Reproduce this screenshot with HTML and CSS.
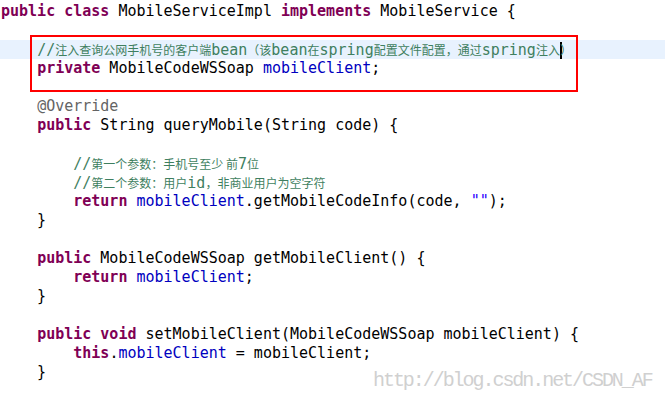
FILE: index.html
```html
<!DOCTYPE html>
<html>
<head>
<meta charset="utf-8">
<link rel="stylesheet" href="styles.css">
</head>
<body>
<div class="editor">
  <div class="ln"><span class="kw">public</span> <span class="kw">class</span> MobileServiceImpl <span class="kw">implements</span> MobileService {</div>
  <div class="ln"> </div>
  <div class="ln current">    <span class="cm">//<span class="zh">注入查询公网手机号的客户端</span>bean<span class="zh">（该</span>bean<span class="zh">在</span>spring<span class="zh">配置文件配置，通过</span>spring<span class="zh">注入</span><span class="caret"></span><span class="zh">）</span></span></div>
  <div class="ln">    <span class="kw">private</span> MobileCodeWSSoap <span class="fd">mobileClient</span>;</div>
  <div class="ln"> </div>
  <div class="ln">    <span class="an">@Override</span></div>
  <div class="ln">    <span class="kw">public</span> String queryMobile(String code) {</div>
  <div class="ln"> </div>
  <div class="ln">        <span class="cm">//<span class="zh">第一个参数：手机号至少 前</span>7<span class="zh">位</span></span></div>
  <div class="ln">        <span class="cm">//<span class="zh">第二个参数：用户</span>id<span class="zh">，非商业用户为空字符</span></span></div>
  <div class="ln">        <span class="kw">return</span> <span class="fd">mobileClient</span>.getMobileCodeInfo(code, <span class="st">""</span>);</div>
  <div class="ln">    }</div>
  <div class="ln"> </div>
  <div class="ln">    <span class="kw">public</span> MobileCodeWSSoap getMobileClient() {</div>
  <div class="ln">        <span class="kw">return</span> <span class="fd">mobileClient</span>;</div>
  <div class="ln">    }</div>
  <div class="ln"> </div>
  <div class="ln">    <span class="kw">public</span> <span class="kw">void</span> setMobileClient(MobileCodeWSSoap mobileClient) {</div>
  <div class="ln">        <span class="kw">this</span>.<span class="fd">mobileClient</span> = mobileClient;</div>
  <div class="ln">    }</div>
  <div class="annot-box"></div>
  <div class="watermark">http://blog.csdn.net/CSDN_AF</div>
</div>
</body>
</html>
```
FILE: styles.css
```css
html, body {
  margin: 0;
  padding: 0;
  background: #ffffff;
}
body {
  width: 665px;
  height: 402px;
  overflow: hidden;
}
.editor {
  position: relative;
  width: 665px;
  height: 402px;
  padding-top: 2px;
  box-sizing: border-box;
  font-family: "DejaVu Sans Mono", monospace;
  font-size: 15px;
  color: #000000;
}
.ln {
  height: 19px;
  line-height: 19px;
  padding-left: 1px;
  white-space: pre;
}
.current {
  background: #e8f2fe;
}
.kw {
  color: #7f0055;
  font-weight: bold;
}
.cm {
  color: #3f7f5f;
}
.fd {
  color: #0000c0;
}
.st {
  color: #2a00ff;
}
.an {
  color: #646464;
}
.zh {
  font-family: "Noto Sans CJK SC", sans-serif;
  font-size: 12px;
}
.caret {
  display: inline-block;
  width: 2px;
  height: 17px;
  background: #000000;
  vertical-align: -4px;
  margin-right: -2px;
}
.annot-box {
  position: absolute;
  left: 30px;
  top: 35px;
  width: 548px;
  height: 57px;
  box-sizing: border-box;
  border: 2px solid #ff0000;
}
.watermark {
  position: absolute;
  left: 373px;
  top: 369px;
  font-family: "Liberation Mono", monospace;
  font-size: 20px;
  letter-spacing: -2.05px;
  line-height: 24px;
  color: #d0d0d0;
  white-space: pre;
}
```
